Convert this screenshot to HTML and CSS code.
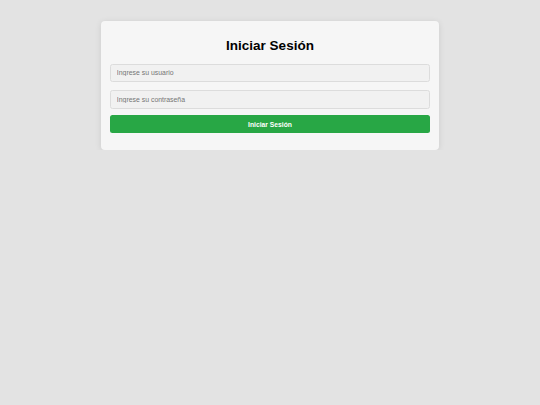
FILE: index.html
```html
<!DOCTYPE html>
<html lang="es">
<head>
  <meta charset="UTF-8">
  <meta name="viewport" content="width=device-width, initial-scale=1.0">
  <title>Iniciar Sesión</title>
  <link rel="stylesheet" href="styles.css">
</head>
<body>

  <div class="login-container">
    <h2>Iniciar Sesión</h2>
    <form class="login-form">
      <input type="text" id="username" placeholder="Ingrese su usuario">
      <input type="password" id="password" placeholder="Ingrese su contraseña">
      <button type="submit" class="btn">Iniciar Sesión</button>
    </form>
  </div>

</body>
</html>
```

FILE: styles.css
```css
body {
  font-family: "Liberation Sans", Arial, sans-serif;
  margin: 0;
  padding: 0;
  background-color: #e3e3e3;
}
.login-container {
  width: 337.5px;
  box-sizing: border-box;
  margin: 21px auto 0;
  padding: 17px 9px 17px;
  background-color: #f6f6f6;
  border-radius: 4px;
  box-shadow: 0 1px 6px rgba(0, 0, 0, 0.1);
}
.login-container h2 {
  margin: 0 0 10px;
  font-size: 13.5px;
  line-height: 15.5px;
  text-align: center;
  color: #000;
}
.login-form {
  display: flex;
  flex-direction: column;
  margin: 0;
}
.login-form input {
  box-sizing: border-box;
  width: 100%;
  height: 18.4px;
  padding: 0 5.6px;
  margin: 0 0 8.6px;
  font-family: inherit;
  font-size: 6.9px;
  color: #333;
  background-color: #f1f1f1;
  border: 1px solid #dcdcdc;
  border-radius: 2.5px;
}
.login-form input::placeholder {
  color: #757575;
}
.login-form input#password {
  margin-bottom: 6.3px;
}
.login-form .btn {
  height: 17.7px;
  padding: 0;
  font-family: inherit;
  font-size: 6.75px;
  font-weight: bold;
  color: white;
  background-color: #28a745;
  border: none;
  border-radius: 2.5px;
  cursor: pointer;
}
```
